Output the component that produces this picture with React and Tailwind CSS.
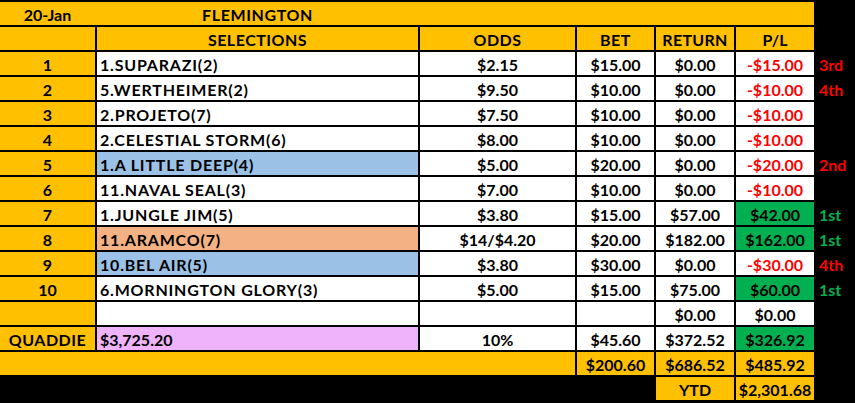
import React from "react";

const O = "bg-[#ffc000]";
const W = "bg-white";
const BLUE = "bg-[#9bc2e6]";
const PEACH = "bg-[#f4b183]";
const PINK = "bg-[#efb3fb]";
const GREEN = "bg-[#00b050]";

const rows = [
  ["1", "1.SUPARAZI(2)", W, "$2.15", "$15.00", "$0.00", "-$15.00", false, "3rd", "r"],
  ["2", "5.WERTHEIMER(2)", W, "$9.50", "$10.00", "$0.00", "-$10.00", false, "4th", "r"],
  ["3", "2.PROJETO(7)", W, "$7.50", "$10.00", "$0.00", "-$10.00", false, "", ""],
  ["4", "2.CELESTIAL STORM(6)", W, "$8.00", "$10.00", "$0.00", "-$10.00", false, "", ""],
  ["5", "1.A LITTLE DEEP(4)", BLUE, "$5.00", "$20.00", "$0.00", "-$20.00", false, "2nd", "r"],
  ["6", "11.NAVAL SEAL(3)", W, "$7.00", "$10.00", "$0.00", "-$10.00", false, "", ""],
  ["7", "1.JUNGLE JIM(5)", W, "$3.80", "$15.00", "$57.00", "$42.00", true, "1st", "g"],
  ["8", "11.ARAMCO(7)", PEACH, "$14/$4.20", "$20.00", "$182.00", "$162.00", true, "1st", "g"],
  ["9", "10.BEL AIR(5)", BLUE, "$3.80", "$30.00", "$0.00", "-$30.00", false, "4th", "r"],
  ["10", "6.MORNINGTON GLORY(3)", W, "$5.00", "$15.00", "$75.00", "$60.00", true, "1st", "g"],
];

function C({ bg, children, className = "" }) {
  return (
    <div className={`${bg} flex items-center justify-center pt-[2px] ${className}`}>{children}</div>
  );
}

export default function App() {
  return (
    <div className="w-[855px] h-[403px] bg-black pt-[2px] font-[Lato,sans-serif] font-bold text-[16px] leading-none text-black">
      <div className="grid grid-cols-[95px_321px_155px_77px_78px_78px_39px] grid-rows-[repeat(16,23px)] gap-[2px]">
        {/* title */}
        <div className={`${O} col-span-6 flex items-center pt-[2px]`}>
          <div className="w-[95px] text-center">20-Jan</div>
          <div className="w-[325px] text-center tracking-[0.6px]">FLEMINGTON</div>
        </div>
        <div />
        {/* header */}
        <C bg={O} />
        <C bg={O} className="tracking-[0.5px]">SELECTIONS</C>
        <C bg={O} className="tracking-[0.5px]">ODDS</C>
        <C bg={O} className="tracking-[0.5px]">BET</C>
        <C bg={O} className="tracking-[0.3px]">RETURN</C>
        <C bg={O}>P/L</C>
        <div />
        {rows.map((r) => (
          <React.Fragment key={r[0]}>
            <C bg={O}>{r[0]}</C>
            <div className={`${r[2]} flex items-center pl-[3px] pt-[2px] tracking-[0.8px]`}>{r[1]}</div>
            <C bg={W}>{r[3]}</C>
            <C bg={W}>{r[4]}</C>
            <C bg={W}>{r[5]}</C>
            <C bg={r[7] ? GREEN : W} className={r[7] ? "" : "text-[#ff0000]"}>
              {r[6]}
            </C>
            <div
              className={`flex items-center pl-[3px] pt-[2px] ${
                r[9] === "g" ? "text-[#00b050]" : "text-[#ff0000]"
              }`}
            >
              {r[8]}
            </div>
          </React.Fragment>
        ))}
        {/* empty row */}
        <C bg={O} />
        <C bg={W} />
        <C bg={W} />
        <C bg={W} />
        <C bg={W}>$0.00</C>
        <C bg={W}>$0.00</C>
        <div />
        {/* quaddie */}
        <C bg={O} className="tracking-[0.5px]">QUADDIE</C>
        <div className={`${PINK} flex items-center pl-[3px] pt-[2px]`}>$3,725.20</div>
        <C bg={W}>10%</C>
        <C bg={W}>$45.60</C>
        <C bg={W}>$372.52</C>
        <C bg={GREEN}>$326.92</C>
        <div />
        {/* totals */}
        <div className={`${O} col-span-3`} />
        <C bg={O}>$200.60</C>
        <C bg={O}>$686.52</C>
        <C bg={O}>$485.92</C>
        <div />
        {/* ytd */}
        <div className="col-span-4" />
        <C bg={O}>YTD</C>
        <C bg={O}>$2,301.68</C>
        <div />
      </div>
    </div>
  );
}
